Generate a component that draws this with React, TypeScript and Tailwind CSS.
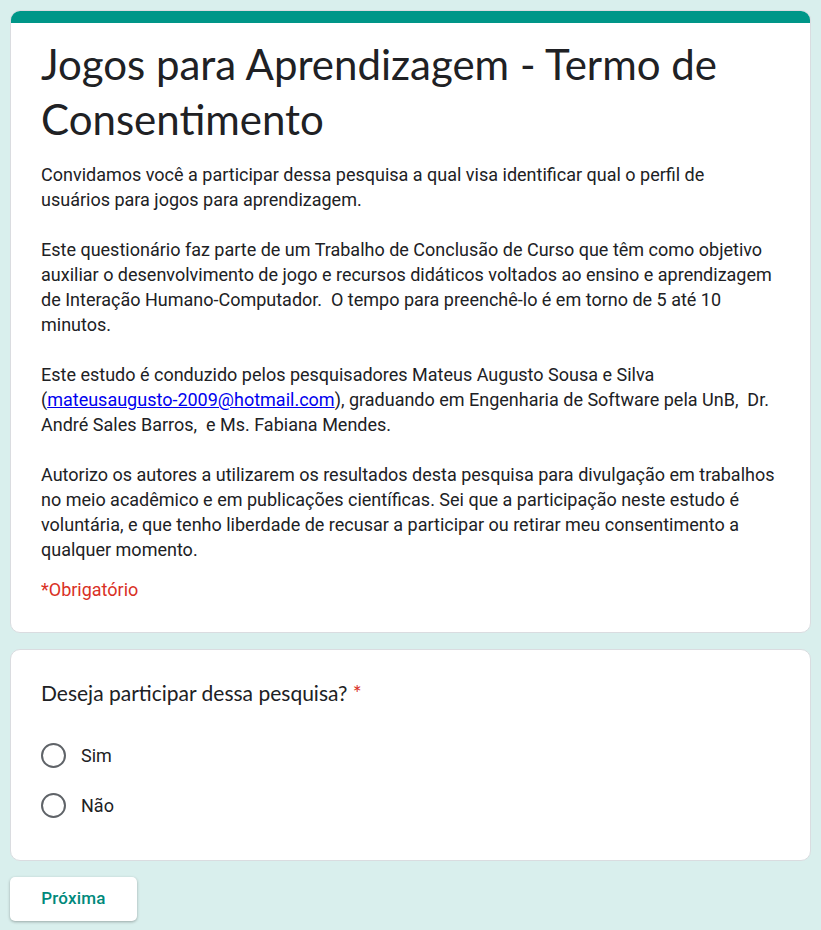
import React from 'react';

const Radio: React.FC<{ label: string }> = ({ label }) => (
  <label className="flex items-center gap-[15px] h-[50px] cursor-pointer">
    <span className="w-[25px] h-[25px] rounded-full border-2 border-[#5f6368] shrink-0" />
    <span className="text-[18px] text-[#202124]">{label}</span>
  </label>
);

export default function App() {
  return (
    <div className="min-h-screen bg-[#d9efed] px-[10px] pt-[10px] pb-[10px]" style={{ fontFamily: 'Roboto, Arial, sans-serif' }}>
      {/* Header card */}
      <div className="bg-white rounded-[10px] border border-[#dadce0] overflow-hidden">
        <div className="h-[12px] bg-[#009688]" />
        <div className="pl-[30px] pr-[34px] pt-[14px] pb-[30px]">
          <h1
            className="text-[42px] leading-[55px] text-[#202124]"
            style={{ fontFamily: 'Lato, "Open Sans", sans-serif' }}
          >
            Jogos para Aprendizagem - Termo de Consentimento
          </h1>
          <div className="mt-[15px] text-[18px] leading-[25px] text-[#202124] space-y-[25px]">
            <p>
              Convidamos você a participar dessa pesquisa a qual visa identificar qual o perfil de usuários para jogos para aprendizagem.
            </p>
            <p>
              Este questionário faz parte de um Trabalho de Conclusão de Curso que têm como objetivo auxiliar o desenvolvimento de jogo e recursos didáticos voltados ao ensino e aprendizagem de Interação Humano-Computador.&nbsp; O tempo para preenchê-lo é em torno de 5 até 10 minutos.
            </p>
            <p>
              Este estudo é conduzido pelos pesquisadores Mateus Augusto Sousa e Silva (<a href="#" className="text-[#0000ee] underline whitespace-nowrap">mateusaugusto-2009@hotmail.com</a>), graduando em Engenharia de Software pela UnB,&nbsp; Dr. André Sales Barros,&nbsp; e Ms. Fabiana Mendes.
            </p>
            <p>
              Autorizo os autores a utilizarem os resultados desta pesquisa para divulgação em trabalhos no meio acadêmico e em publicações científicas. Sei que a participação neste estudo é voluntária, e que tenho liberdade de recusar a participar ou retirar meu consentimento a qualquer momento.
            </p>
          </div>
          <div className="mt-[15px] text-[18px] leading-[25px] text-[#d93025]">*Obrigatório</div>
        </div>
      </div>

      {/* Question card */}
      <div className="mt-[16px] bg-white rounded-[10px] border border-[#dadce0] px-[30px] pt-[29px] pb-[30px]">
        <div
          className="text-[21px] leading-[28px] text-[#202124]"
          style={{ fontFamily: 'Lato, "Open Sans", sans-serif' }}
        >
          Deseja participar dessa pesquisa? <span className="text-[#d93025]">*</span>
        </div>
        <div className="mt-[23px] flex flex-col">
          <Radio label="Sim" />
          <Radio label="Não" />
        </div>
      </div>

      {/* Button */}
      <button className="mt-[16px] w-[127px] h-[44px] bg-white rounded-[5px] shadow-[0_1px_3px_rgba(0,0,0,0.3)] text-[17px] font-medium text-[#00897b] tracking-[0.2px]">
        Próxima
      </button>
    </div>
  );
}
